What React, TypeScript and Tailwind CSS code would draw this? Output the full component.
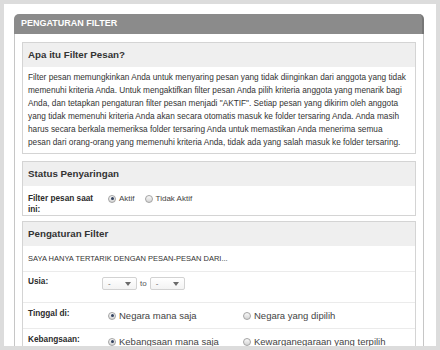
import type { ReactNode } from "react";

const font = { fontFamily: '"Liberation Sans", Arial, sans-serif' };

function Radio({ checked = false }: { checked?: boolean }) {
  return (
    <span className="relative inline-block w-[8px] h-[8px] shrink-0 rounded-full border border-[#a3a3a3] bg-linear-to-b from-[#fafafa] to-[#d4d4d4]">
      {checked && <span className="absolute inset-[1.5px] rounded-full bg-[#33425f]" />}
    </span>
  );
}

function Select() {
  return (
    <span className="inline-flex items-center justify-between w-[35px] h-[13px] border border-[#d2d2d2] rounded-[2px] bg-linear-to-b from-white to-[#f3f3f3] pl-[5px] pr-[5px] text-[8px] text-[#666]">
      <span>-</span>
      <svg width="6" height="4" viewBox="0 0 6 4">
        <path d="M0 0 L6 0 L3 4 Z" fill="#6a6a6a" />
      </svg>
    </span>
  );
}

function Section({ title, className = "", children }: { title: string; className?: string; children: ReactNode }) {
  return (
    <div className={`border border-[#d4d4d4] ${className}`}>
      <div className="h-[24px] bg-[#efefef] flex items-center px-[5px] text-[9.75px] font-bold text-[#333]">
        {title}
      </div>
      {children}
    </div>
  );
}

const intro = [
  "Filter pesan memungkinkan Anda untuk menyaring pesan yang tidak diinginkan dari anggota yang tidak",
  "memenuhi kriteria Anda. Untuk mengaktifkan filter pesan Anda pilih kriteria anggota yang menarik bagi",
  'Anda, dan tetapkan pengaturan filter pesan menjadi "AKTIF". Setiap pesan yang dikirim oleh anggota',
  "yang tidak memenuhi kriteria Anda akan secara otomatis masuk ke folder tersaring Anda. Anda masih",
  "harus secara berkala memeriksa folder tersaring Anda untuk memastikan Anda menerima semua",
  "pesan dari orang-orang yang memenuhi kriteria Anda, tidak ada yang salah masuk ke folder tersaring.",
];

function ChoiceRow({
  label,
  first,
  second,
  height,
}: {
  label: string;
  first: string;
  second: string;
  height: string;
}) {
  return (
    <div className={`flex items-start ${height} border-t border-[#ebebeb] px-[5px]`}>
      <div className="w-[74px] pt-[5px] text-[8.25px] leading-[11px] font-bold text-[#2b2b2b]">{label}</div>
      <div className="flex items-center pt-[7px] text-[9.5px] leading-[11px] text-[#444]">
        <label className="flex items-center gap-[3px] w-[141px] pl-[6px]">
          <Radio checked />
          <span>{first}</span>
        </label>
        <label className="flex items-center gap-[3px]">
          <Radio />
          <span>{second}</span>
        </label>
      </div>
    </div>
  );
}

export default function App() {
  return (
    <div style={font} className="w-[440px] h-[350px] bg-[#dcdcdc] p-[4px] overflow-hidden">
      <div className="h-full bg-white pt-[10px] pl-[10px] pr-[12px] overflow-hidden">
        <div className="h-[20px] rounded-t-[5px] bg-[#8b8b8b] border-r-2 border-[#777] flex items-center pl-[7px] text-[9px] font-bold text-white">
          PENGATURAN FILTER
        </div>
        <div className="border-x border-[#c6c6c6] px-[7px] pt-[8px] flex flex-col">
          <Section title="Apa itu Filter Pesan?">
            <div className="px-[5px] pt-[4px] pb-[4px] text-[8.25px] leading-[13px] text-[#333] whitespace-nowrap">
              {intro.map((line) => (
                <div key={line}>{line}</div>
              ))}
            </div>
          </Section>

          <Section title="Status Penyaringan" className="mt-[7px]">
            <div className="flex items-start px-[5px] pt-[7px]">
              <div className="w-[74px] text-[8.25px] leading-[11px] font-bold text-[#2b2b2b]">
                Filter pesan saat ini:
              </div>
              <div className="flex items-center h-[11px] pl-[6px] text-[8px] text-[#444]">
                <label className="flex items-center gap-[3px] mr-[10px]">
                  <Radio checked />
                  <span>Aktif</span>
                </label>
                <label className="flex items-center gap-[3px]">
                  <Radio />
                  <span>Tidak Aktif</span>
                </label>
              </div>
            </div>
          </Section>

          <Section title="Pengaturan Filter" className="mt-[5px]">
            <div className="h-[25px] flex items-center px-[5px] text-[7.5px] text-[#333]">
              SAYA HANYA TERTARIK DENGAN PESAN-PESAN DARI...
            </div>
            <div className="flex items-start h-[31px] border-t border-[#ebebeb] px-[5px]">
              <div className="w-[74px] pt-[4px] text-[8.25px] leading-[11px] font-bold text-[#2b2b2b]">Usia:</div>
              <div className="flex items-center pt-[5px] text-[8px] text-[#555]">
                <Select />
                <span className="mx-[3px]">to</span>
                <Select />
              </div>
            </div>
            <ChoiceRow label="Tinggal di:" first="Negara mana saja" second="Negara yang dipilih" height="h-[26px]" />
            <ChoiceRow
              label="Kebangsaan:"
              first="Kebangsaan mana saja"
              second="Kewarganegaraan yang terpilih"
              height="h-[30px]"
            />
          </Section>
        </div>
      </div>
    </div>
  );
}
